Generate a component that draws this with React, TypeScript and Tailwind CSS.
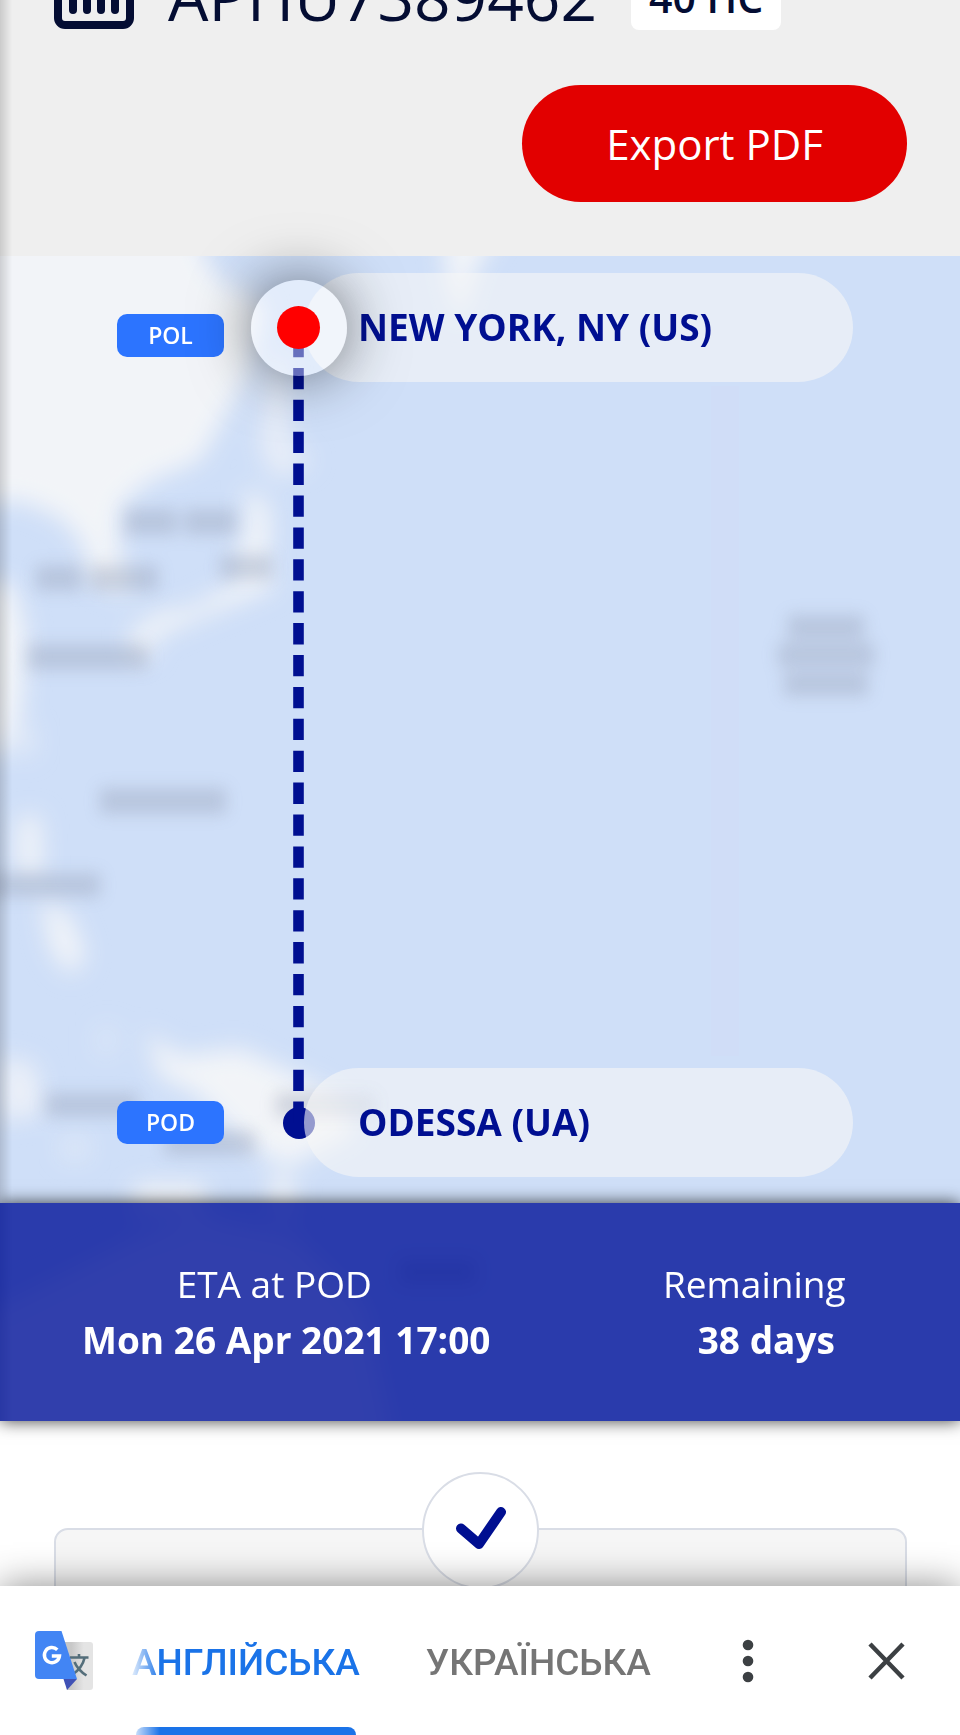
import { ReactNode } from "react";

const ContainerIcon = () => {
    return (
        <svg viewBox="0 0 80 64" className="w-20 h-16 shrink-0" fill="none" stroke="#040d33" strokeLinecap="round">
            <rect x="4" y="4" width="72" height="56" rx="7" strokeWidth="8" />
            <path d="M19 16v29M33 16v29M47 16v29M61 16v29" strokeWidth="8" />
        </svg>
    )
}

const TranslateIcon = () => {
    return (
        <svg viewBox="0 0 58 59" className="w-[58px] h-[59px] shrink-0">
            <defs>
                <linearGradient id="sheet" x1="0" y1="0" x2="1" y2="0">
                    <stop offset="0.3" stopColor="#c8c8c8" />
                    <stop offset="0.7" stopColor="#e4e4e4" />
                </linearGradient>
            </defs>
            <path d="M27 11h28a3 3 0 0 1 3 3v42a3 3 0 0 1-3 3H32z" fill="url(#sheet)" />
            <path d="M35 26.500h18.500M44 23v4M49.500 27c-1.500 7-6 12.500-12 16.500M39.500 31c2 5 6.500 10 12 13.500" fill="none" stroke="#546e7a" strokeWidth="2.600" />
            <path d="M28.500 48H42L32 59z" fill="#3f51b5" />
            <path d="M4 0h22.500L42 48H4a4 4 0 0 1-4-4V4a4 4 0 0 1 4-4z" fill="#4285f4" />
            <path d="M22.300 18.700a7.600 7.600 0 1 0 2.200 6.300h-7.700" fill="none" stroke="#fff" strokeWidth="3.400" />
        </svg>
    )
}

// soft world map behind the route and the ETA bar
const MapBackground = () => {
    return (
        <svg viewBox="0 0 960 1165" preserveAspectRatio="none" className="absolute inset-0 w-full h-full" aria-hidden="true">
            <defs>
                <filter id="soft" x="-20%" y="-20%" width="140%" height="140%">
                    <feGaussianBlur stdDeviation="12" />
                </filter>
                <filter id="label" x="-20%" y="-20%" width="140%" height="140%">
                    <feGaussianBlur stdDeviation="8" />
                </filter>
            </defs>
            <rect width="960" height="1165" fill="#cfdff8" />
            <g filter="url(#soft)" fill="#f2f4f8">
                <path d="M-40-40H190L215 20 265 50 250 115 225 160 200 205 150 225 120 250 120 315 80 285 60 262 20 245-40 250z" />
                <path d="M440-40h70L478 10l-18 60-14-50z" />
                <path d="M272 100l12 0 8 90 22 15-39 20-16-35z" opacity="0.7" />
                <path d="M245 230l25 20 0 50-25 20-8-20 10-35z" />
                <path d="M75 250l50 60 5 30-40-15z" />
                <path d="M270 312l5 20-75 30-50 22-5-24 50-10 50-30z" />
                <path d="M128 372l26 0-2 28-18 4z" />
                <path d="M-20 320l35 10 12 50-5 75-22 45-20 0z" />
                <path d="M14 470h20v30H16z" opacity="0.6" />
                <path d="M18 560l22 0 2 60-25 0z" />
                <path d="M40 640l30 20 16 40-15 20-20-25z" />
                <path d="M0 800l35 8 8 50-43 8z" opacity="0.8" />
                <path d="M145 775l35 25 60-8 95 45 22 40-70 35-42-25-50-50-35-15z" />
                <path d="M95 770h25l-5 30h-20z" opacity="0.3" />
                <path d="M60 880h30v24h-30z" opacity="0.4" />
                <path d="M135 928h70v34h-75zM270 920h22l4 47-22-5z" />
                <path d="M60 1020l80-40 60-20 95 20 70 70 30 140H-20V1060z" />
            </g>
            <path d="M725 130v670" stroke="#d3dcf7" strokeWidth="28" opacity="0.45" />
            <path d="M520 780h440" stroke="#d3e3fb" strokeWidth="36" opacity="0.5" filter="url(#soft)" />
            <g filter="url(#label)" fill="#8e97ad" opacity="0.34">
                <rect x="125" y="253" width="52" height="26" />
                <rect x="184" y="253" width="52" height="26" />
                <rect x="36" y="309" width="46" height="26" />
                <rect x="90" y="309" width="68" height="26" />
                <rect x="220" y="299" width="52" height="24" />
                <rect x="28" y="388" width="120" height="26" />
                <rect x="100" y="532" width="126" height="26" />
                <rect x="-10" y="617" width="110" height="24" />
                <rect x="46" y="837" width="92" height="24" />
                <rect x="276" y="837" width="100" height="24" />
                <rect x="165" y="875" width="90" height="24" />
                <rect x="788" y="359" width="76" height="24" />
                <rect x="778" y="387" width="96" height="24" />
                <rect x="784" y="416" width="84" height="24" />
                <rect x="400" y="1004" width="75" height="24" />
            </g>
        </svg>
    )
}

const Badge = ({ children, className = "" }: { children: ReactNode; className?: string }) => {
    return (
        <span className={`w-[107px] h-[43px] rounded-[10px] bg-[#2c74ff] text-white text-[23px] leading-[42px] font-semibold text-center ${className}`}>
            {children}
        </span>
    )
}

const PortName = ({ children }: { children: ReactNode }) => {
    return (
        <div className="flex-1 h-[109px] rounded-full bg-[#f6f6f6]/60 pl-[54px] text-[#000f91] text-[37px] leading-[108px] font-bold whitespace-nowrap">
            {children}
        </div>
    )
}

const EtaItem = ({ label, value }: { label: string; value: string }) => {
    return (
        <div className="pb-px text-center text-white text-[37px] leading-[56px] whitespace-nowrap">
            <dt>{label}</dt>
            <dd className="pl-6 font-bold">{value}</dd>
        </div>
    )
}

const Header = () => {
    return (
        <header className="bg-[#efefef] h-64 pl-[54px] pr-[53px] overflow-hidden">
            <div className="-mt-9 flex items-center text-[#040d33]">
                <ContainerIcon />
                <h1 className="ml-[34px] text-[64px] leading-[66px]">APHU7389462</h1>
                <span className="ml-[34px] h-[66px] px-[18px] rounded-lg bg-white text-[41px] leading-[66px] font-semibold whitespace-nowrap">40 HC</span>
            </div>
            <div className="mt-[55px] flex justify-end">
                <button className="h-[117px] w-[385px] rounded-full bg-[#e20000] text-white text-[42px]">Export PDF</button>
            </div>
        </header>
    )
}

const Route = () => {
    return (
        <div className="relative h-[947px] pt-[17px] pb-[26px] pl-[117px] pr-[107px] flex flex-col justify-between">
            <svg className="absolute left-[293px] top-20 w-[11px] h-[787px]" aria-hidden="true">
                <line x1="5.500" y1="0" x2="5.500" y2="787" stroke="#000f91" strokeWidth="10.600" strokeDasharray="21.300 10.600" />
            </svg>
            <div className="flex items-center">
                <Badge className="mt-4">POL</Badge>
                <div className="relative z-10 ml-[69px] w-[11px] flex justify-center">
                    <div className="size-24 shrink-0 rounded-full bg-white/40 shadow-[0_0_60px_rgba(0,0,0,0.55)] flex items-center justify-center">
                        <div className="size-[43px] rounded-full bg-[#ff0000]"></div>
                    </div>
                </div>
                <PortName>NEW YORK, NY (US)</PortName>
            </div>
            <div className="flex items-center">
                <Badge>POD</Badge>
                <div className="ml-[69px] w-[11px] flex justify-center">
                    <div className="size-8 shrink-0 rounded-full bg-[#000f91]"></div>
                </div>
                <div className="relative flex-1 flex">
                    <PortName>ODESSA (UA)</PortName>
                </div>
            </div>
        </div>
    )
}

const TranslateBar = () => {
    return (
        <footer className="relative bg-white h-[149px] pl-[35px] pr-9 flex items-center shadow-[0_0_36px_rgba(0,0,0,0.45)] font-[Roboto,sans-serif]">
            <TranslateIcon />
            <div className="flex-1 self-stretch ml-[35px] pl-1 pt-1 flex text-[37px] font-medium [mask-image:linear-gradient(to_right,transparent,black_32px)]">
                <button className="relative text-[#1a73e8]">
                    АНГЛІЙСЬКА
                    <span className="absolute inset-x-1 bottom-0 h-2 rounded-t-lg bg-[#1a73e8]"></span>
                </button>
                <button className="ml-[66px] text-[#757575]">УКРАЇНСЬКА</button>
            </div>
            <button aria-label="More">
                <svg viewBox="0 0 12 44" className="w-3 h-11" fill="#3c4043">
                    <circle cx="6" cy="6" r="5.300" />
                    <circle cx="6" cy="22" r="5.300" />
                    <circle cx="6" cy="38" r="5.300" />
                </svg>
            </button>
            <button aria-label="Close" className="ml-[96px]">
                <svg viewBox="0 0 74 38" className="h-[38px] w-[74px]" stroke="#3c4043" strokeWidth="4.500">
                    <path d="M20 2l33 34M53 2L20 36" />
                </svg>
            </button>
        </footer>
    )
}

const App = () => {
    return (
        <div className="bg-white font-['Open_Sans',sans-serif]">
            <main>
                <div className="relative">
                    <Header />
                    <div className="relative">
                        <MapBackground />
                        <Route />
                        <dl className="relative z-10 h-[218px] bg-[#001198]/80 grid grid-cols-[4fr_3fr] items-center shadow-[0_0_16px_rgba(0,0,0,0.75)]">
                            <EtaItem label="ETA at POD" value="Mon 26 Apr 2021 17:00" />
                            <EtaItem label="Remaining" value="38 days" />
                        </dl>
                    </div>
                    <div className="absolute inset-y-0 left-0 w-3 bg-linear-to-r from-black/15 to-transparent pointer-events-none"></div>
                </div>
                <section className="h-[165px] pl-[54px] pr-[53px] pt-[107px] overflow-hidden">
                    <div className="h-40 rounded-[14px] border-2 border-[#d9dde6] bg-[#f6f6f6] flex justify-center">
                        <div className="-mt-[58px] size-[117px] rounded-full border-2 border-[#d9dde6] bg-white flex items-center justify-center">
                            <svg viewBox="0 0 52 44" className="w-[52px] h-11 -mt-1.5" fill="none" stroke="#000f91" strokeWidth="10" strokeLinecap="round" strokeLinejoin="round">
                                <path d="M6 22.500L24 38 46 6" />
                            </svg>
                        </div>
                    </div>
                </section>
            </main>
            <TranslateBar />
        </div>
    )
}

export default App;
